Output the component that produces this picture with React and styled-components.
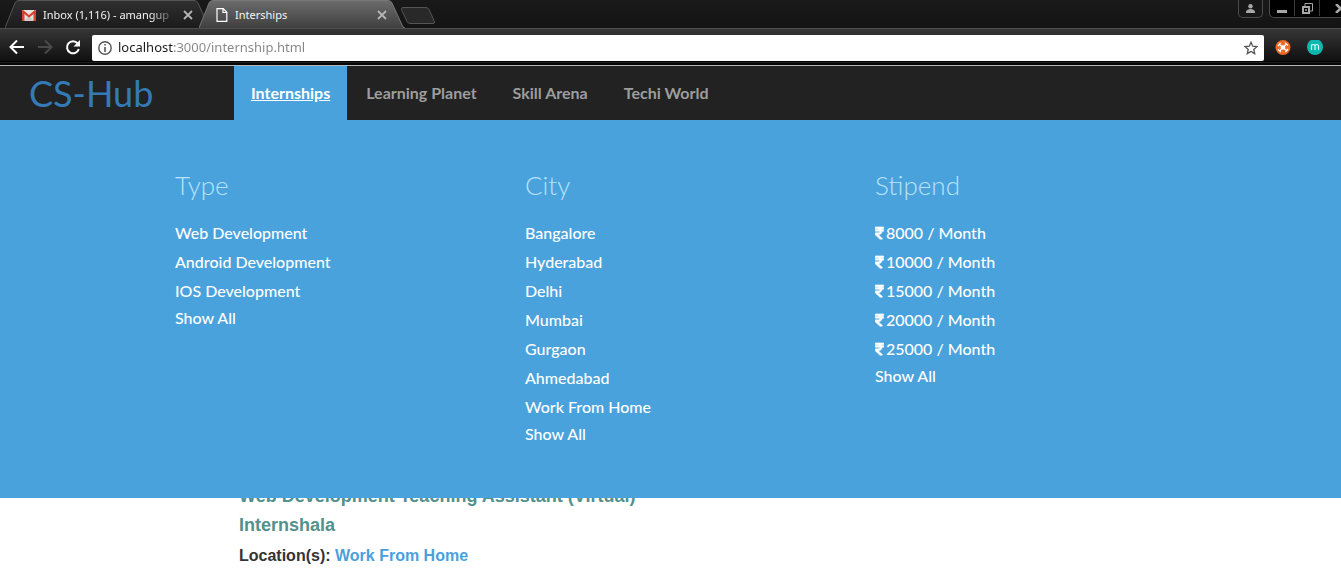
import React from 'react';
import styled, { createGlobalStyle, css } from 'styled-components';
import { FaRupeeSign } from 'react-icons/fa';

const GlobalStyle = createGlobalStyle`
  *, *::before, *::after { box-sizing: border-box; }
  body { margin: 0; background: #fff; color: #333; font-family: "Liberation Sans", Arial, sans-serif; }
  h1, h2, h3, p, ul { margin: 0; padding: 0; }
  ul { list-style: none; }
  a { text-decoration: none; }
  button { border: 0; padding: 0; background: none; color: inherit; font: inherit; }
  svg { display: block; flex: none; }
`;

const blue = '#49a2db';

const Browser = styled.div`
  background: #0a0a0a;
  border-bottom: 1px solid #b4b8b4;
  font-family: "Noto Sans", "Open Sans", sans-serif;
`;

const TabStrip = styled.div`
  display: flex;
  align-items: flex-start;
  height: 28px;
  padding-left: 5px;
  overflow: hidden;
  background: linear-gradient(#191919, #141414);
`;

const Tab = styled.div`
  position: relative;
  display: flex;
  align-items: center;
  gap: 7px;
  width: 206px;
  height: 28px;
  margin-right: -12px;
  padding: 2px 18px 0 17px;
  color: #f4f4f4;
  font-size: 11px;
  z-index: ${(p) => (p.$active ? 1 : 0)};
`;

const TabShape = styled.svg`
  position: absolute;
  inset: 0;
  z-index: -1;
`;

const TabTitle = styled.button`
  flex: 1;
  min-width: 0;
  text-align: left;
  white-space: nowrap;
  line-height: 18px;
  ${(p) => p.$fade && css`mask-image: linear-gradient(to right, #000 calc(100% - 26px), transparent);`}
`;

const CloseButton = styled.button`
  color: #b4b4b4;
`;

const NewTab = styled.button`
  margin: 6px 0 0 7px;
`;

const WindowControls = styled.div`
  display: flex;
  gap: 6px;
  margin-left: auto;
`;

const ControlGroup = styled.div`
  display: flex;
  height: 18px;
  border: solid #4a4a4a;
  border-width: 0 1px 1px;
  border-radius: 0 0 5px 5px;
  background: ${(p) => (p.$plain ? '#171717' : '#000')};
  ${(p) => p.$edge && css`width: 72px; overflow: hidden; border-right-width: 0; border-bottom-right-radius: 0;`}
`;

const ControlButton = styled.button`
  display: flex;
  flex: none;
  align-items: center;
  justify-content: center;
  width: ${(p) => p.$width || 25}px;
  height: 16px;
  color: #a8a8a8;
  & + & { border-left: 1px solid #3a3a3a; }
`;

const Toolbar = styled.div`
  display: flex;
  align-items: center;
  height: 37px;
  padding: 5px 18px 4px 9px;
  border-top: 1px solid #4e4e4e;
  background: linear-gradient(#363636, #101010 32px, #000 32px, #000 33px, #202020 33px, #202020 34px, #060606 34px);
`;

const ToolGroup = styled.div`
  display: flex;
  gap: ${(p) => p.$gap}px;
`;

const ToolButton = styled.button`
  color: ${(p) => (p.$muted ? '#4a4a4a' : '#fff')};
`;

const AddressBar = styled.label`
  display: flex;
  flex: 1;
  align-items: center;
  gap: 6px;
  height: 26px;
  margin: 0 11px;
  padding: 0 6px;
  border-radius: 2px;
  background: #fff;
  color: #555;
`;

const AddressInput = styled.input`
  flex: 1;
  min-width: 0;
  height: 24px;
  padding: 0 0 2px;
  border: 0;
  outline: 0;
  background: linear-gradient(to right, #1c1c1c 56px, #858585 56px);
  background-clip: text;
  color: transparent;
  font-family: "Noto Sans", "Open Sans", sans-serif;
  font-size: 13px;
`;

const SiteNav = styled.nav`
  display: flex;
  align-items: stretch;
  height: 54px;
  background: #222;
  font-family: Lato, sans-serif;
`;

const Brand = styled.a`
  width: 234px;
  padding-left: 29px;
  color: #337ab7;
  font-size: 36px;
  line-height: 54px;
`;

const NavList = styled.ul`
  display: flex;
  gap: 2px;
`;

const NavLink = styled.a`
  display: block;
  padding: 0 17px;
  color: ${(p) => (p.$active ? '#fff' : '#9d9d9d')};
  background: ${(p) => (p.$active ? blue : 'transparent')};
  font-size: 16px;
  font-weight: 700;
  line-height: 54px;
  text-decoration: ${(p) => (p.$active ? 'underline' : 'none')};
`;

const MegaMenu = styled.section`
  position: relative;
  z-index: 1;
  display: grid;
  grid-template-columns: repeat(3, 1fr);
  padding: 49px 116px 52px 175px;
  background: ${blue};
  color: #fff;
  font-family: Lato, sans-serif;
`;

const MenuHeading = styled.h2`
  margin-bottom: 17px;
  color: #b9e2fb;
  font-size: 26px;
  font-weight: 300;
  line-height: 32px;
`;

const MenuItem = styled.li`
  display: flex;
  line-height: 29px;
  &:last-child { line-height: 25px; }
`;

const MenuLink = styled.a`
  display: flex;
  align-items: center;
  gap: 2px;
  color: #fff;
  font-size: 16px;
  font-weight: 500;
`;

const Rupee = styled(FaRupeeSign)`
  width: 9px;
  height: 14px;
  stroke: #fff;
  stroke-width: 20px;
`;

const Listing = styled.main`
  margin-top: -16px;
  padding: 0 239px;
  font-weight: 700;
`;

const ListingTitle = styled.h3`
  color: #52918c;
  font-size: 18px;
  line-height: 29px;
`;

const Location = styled.p`
  padding-top: 3px;
  font-size: 16px;
  line-height: 26px;
`;

const LocationLink = styled.a`
  color: #4a9fdb;
`;

const menus = [
  { title: 'Type', items: ['Web Development', 'Android Development', 'IOS Development'] },
  { title: 'City', items: ['Bangalore', 'Hyderabad', 'Delhi', 'Mumbai', 'Gurgaon', 'Ahmedabad', 'Work From Home'] },
  { title: 'Stipend', rupee: true, items: ['8000 / Month', '10000 / Month', '15000 / Month', '20000 / Month', '25000 / Month'] },
];

const navItems = ['Internships', 'Learning Planet', 'Skill Arena', 'Techi World'];

function TabBackground({ active }) {
  const id = active ? 'tab-active' : 'tab-idle';
  return (
    <TabShape width="206" height="28" aria-hidden="true">
      <defs>
        <linearGradient id={id} x1="0" y1="0" x2="0" y2="1">
          <stop offset="0" stopColor={active ? '#6c6c6c' : '#303030'} />
          <stop offset="1" stopColor={active ? '#3f3f3f' : '#1b1b1b'} />
        </linearGradient>
      </defs>
      <path d="M0 28 L10 3 Q11 .5 14 .5 H189 Q192 .5 193 3 L203 25 Q204 28 206 28 Z" fill={`url(#${id})`} />
      <path d="M0 28 L10 3 Q11 .5 14 .5 H189 Q192 .5 193 3 L203 25 Q204 28 206 28" fill="none" stroke={active ? '#777' : '#555'} />
    </TabShape>
  );
}

function CloseTab() {
  return (
    <CloseButton aria-label="Close tab">
      <svg width="10" height="10" viewBox="0 0 10 10" stroke="currentColor" strokeWidth="1.800"><path d="M1 1l8 8M9 1L1 9" /></svg>
    </CloseButton>
  );
}

function BrowserChrome() {
  return (
    <Browser>
      <TabStrip>
        <Tab>
          <TabBackground />
          <svg width="14" height="11" viewBox="0 0 14 11">
            <path d="M0 0h14v11H0z" fill="#e9e5e3" />
            <path d="M2 11l5-5 5 5z" fill="#cfcac8" />
            <path d="M0 1.200Q0 0 1.200 0L7 5 12.800 0Q14 0 14 1.200V11h-2.500V4L7 7.800 2.500 4v7H0z" fill="#d8432f" />
          </svg>
          <TabTitle $fade>Inbox (1,116) - amangup</TabTitle>
          <CloseTab />
        </Tab>
        <Tab $active>
          <TabBackground active />
          <svg width="12" height="14" viewBox="0 0 12 14" fill="none" stroke="#fff" strokeWidth="1.200"><path d="M1 .7h6.200L10.800 4.300v9H1zM7 .7v3.800h3.800" /></svg>
          <TabTitle>Interships</TabTitle>
          <CloseTab />
        </Tab>
        <NewTab aria-label="New tab">
          <svg width="36" height="19" viewBox="0 0 36 19"><path d="M3 1.500h23q2 0 3 2l5.500 12q.5 2-1.500 2H10q-2 0-3-2L1.500 3.500q-.5-2 1.500-2z" fill="#292929" stroke="#555" /></svg>
        </NewTab>
        <WindowControls>
          <ControlGroup $plain>
            <ControlButton $width={23} aria-label="Profile">
              <svg width="9" height="9" viewBox="0 0 9 9" fill="currentColor"><circle cx="4.500" cy="2.200" r="2.200" /><path d="M0 9V7.500Q1 5 4.500 5T9 7.500V9z" /></svg>
            </ControlButton>
          </ControlGroup>
          <ControlGroup $edge>
            <ControlButton $width={24} aria-label="Minimize">
              <svg width="10" height="9" viewBox="0 0 10 9" fill="currentColor"><path d="M0 6h10v3H0z" /></svg>
            </ControlButton>
            <ControlButton aria-label="Restore">
              <svg width="11" height="11" viewBox="0 0 11 11" fill="none" stroke="currentColor"><path d="M3 3V.5h7.500V8H8" /><path d="M1 4h6v6H1z" strokeWidth="2" /><path d="M3.500 6.500h1v1h-1z" /></svg>
            </ControlButton>
            <ControlButton $width={41} aria-label="Close window">
              <svg width="11" height="9" viewBox="0 0 11 9" stroke="currentColor" strokeWidth="2.500"><path d="M1 0l9 9M10 0L1 9" /></svg>
            </ControlButton>
          </ControlGroup>
        </WindowControls>
      </TabStrip>
      <Toolbar>
        <ToolGroup $gap={12}>
          <ToolButton aria-label="Back">
            <svg width="16" height="16" viewBox="0 0 16 16" fill="none" stroke="currentColor" strokeWidth="2"><path d="M15 7H2M8 .5L1.500 7 8 13.500" /></svg>
          </ToolButton>
          <ToolButton $muted aria-label="Forward">
            <svg width="16" height="16" viewBox="0 0 16 16" fill="none" stroke="currentColor" strokeWidth="2"><path d="M1 7h13M8 .5L14.500 7 8 13.500" /></svg>
          </ToolButton>
          <ToolButton aria-label="Reload">
            <svg width="16" height="16" viewBox="0 1 16 16"><path d="M12.700 4.500A6 6 0 1 0 13.800 10" fill="none" stroke="currentColor" strokeWidth="2" /><path d="M15 1v6.500H8.500z" fill="currentColor" /></svg>
          </ToolButton>
        </ToolGroup>
        <AddressBar>
          <svg width="14" height="14" viewBox="0 0 14 14"><circle cx="7" cy="7" r="6.200" fill="none" stroke="currentColor" strokeWidth="1.400" /><path d="M6.200 3h1.600v1.600H6.200zM6.200 6h1.600v5H6.200z" fill="currentColor" /></svg>
          <AddressInput aria-label="Address" defaultValue="localhost:3000/internship.html" />
          <svg width="14" height="14" viewBox="0 0 14 14" fill="none" stroke="currentColor" strokeWidth="1.300"><path d="M7 1.300l1.700 3.900 4.300.4-3.200 2.800.9 4.200L7 10.400l-3.700 2.200.9-4.200L1 5.600l4.300-.4z" /></svg>
        </AddressBar>
        <ToolGroup $gap={16}>
          <ToolButton aria-label="Extension">
            <svg width="16" height="16" viewBox="0 0 16 16"><circle cx="8" cy="7.500" r="7.500" fill="#ee6a25" /><g stroke="#fff" fill="none"><path d="M4.500 4.500l7 6M11 4.500l-6 6" strokeWidth="1.300" /><path d="M3 6l2.500-3M10 3l3 2.500M13 9l-2.500 3M6 12L3 9.500" strokeWidth="1.300" /></g><circle cx="8" cy="7.500" r="2.300" fill="#fff" /></svg>
          </ToolButton>
          <ToolButton aria-label="Account extension">
            <svg width="16" height="16" viewBox="0 1 16 16"><circle cx="8" cy="8" r="8" fill="#0eb8ae" /><path d="M4.500 11V5.500M4.500 7.200Q4.800 5.500 6.300 5.500T8 7.200V11M8 7.200Q8.300 5.500 9.800 5.500t1.700 1.700V11" fill="none" stroke="#d9fffb" strokeWidth="1.200" /></svg>
          </ToolButton>
        </ToolGroup>
      </Toolbar>
    </Browser>
  );
}

export default function App() {
  return (
    <>
      <GlobalStyle />
      <BrowserChrome />
      <SiteNav>
        <Brand href="#home">CS-Hub</Brand>
        <NavList>
          {navItems.map((item, i) => (
            <li key={item}><NavLink href="#nav" $active={i === 0}>{item}</NavLink></li>
          ))}
        </NavList>
      </SiteNav>
      <MegaMenu>
        {menus.map((menu) => (
          <div key={menu.title}>
            <MenuHeading>{menu.title}</MenuHeading>
            <ul>
              {menu.items.map((item) => (
                <MenuItem key={item}>
                  <MenuLink href="#filter">
                    {menu.rupee && <Rupee aria-hidden="true" />}
                    {item}
                  </MenuLink>
                </MenuItem>
              ))}
              <MenuItem><MenuLink href="#all">Show All</MenuLink></MenuItem>
            </ul>
          </div>
        ))}
      </MegaMenu>
      <Listing>
        <ListingTitle>Web Development Teaching Assistant (Virtual)</ListingTitle>
        <ListingTitle>Internshala</ListingTitle>
        <Location>Location(s): <LocationLink href="#location">Work From Home</LocationLink></Location>
      </Listing>
    </>
  );
}
